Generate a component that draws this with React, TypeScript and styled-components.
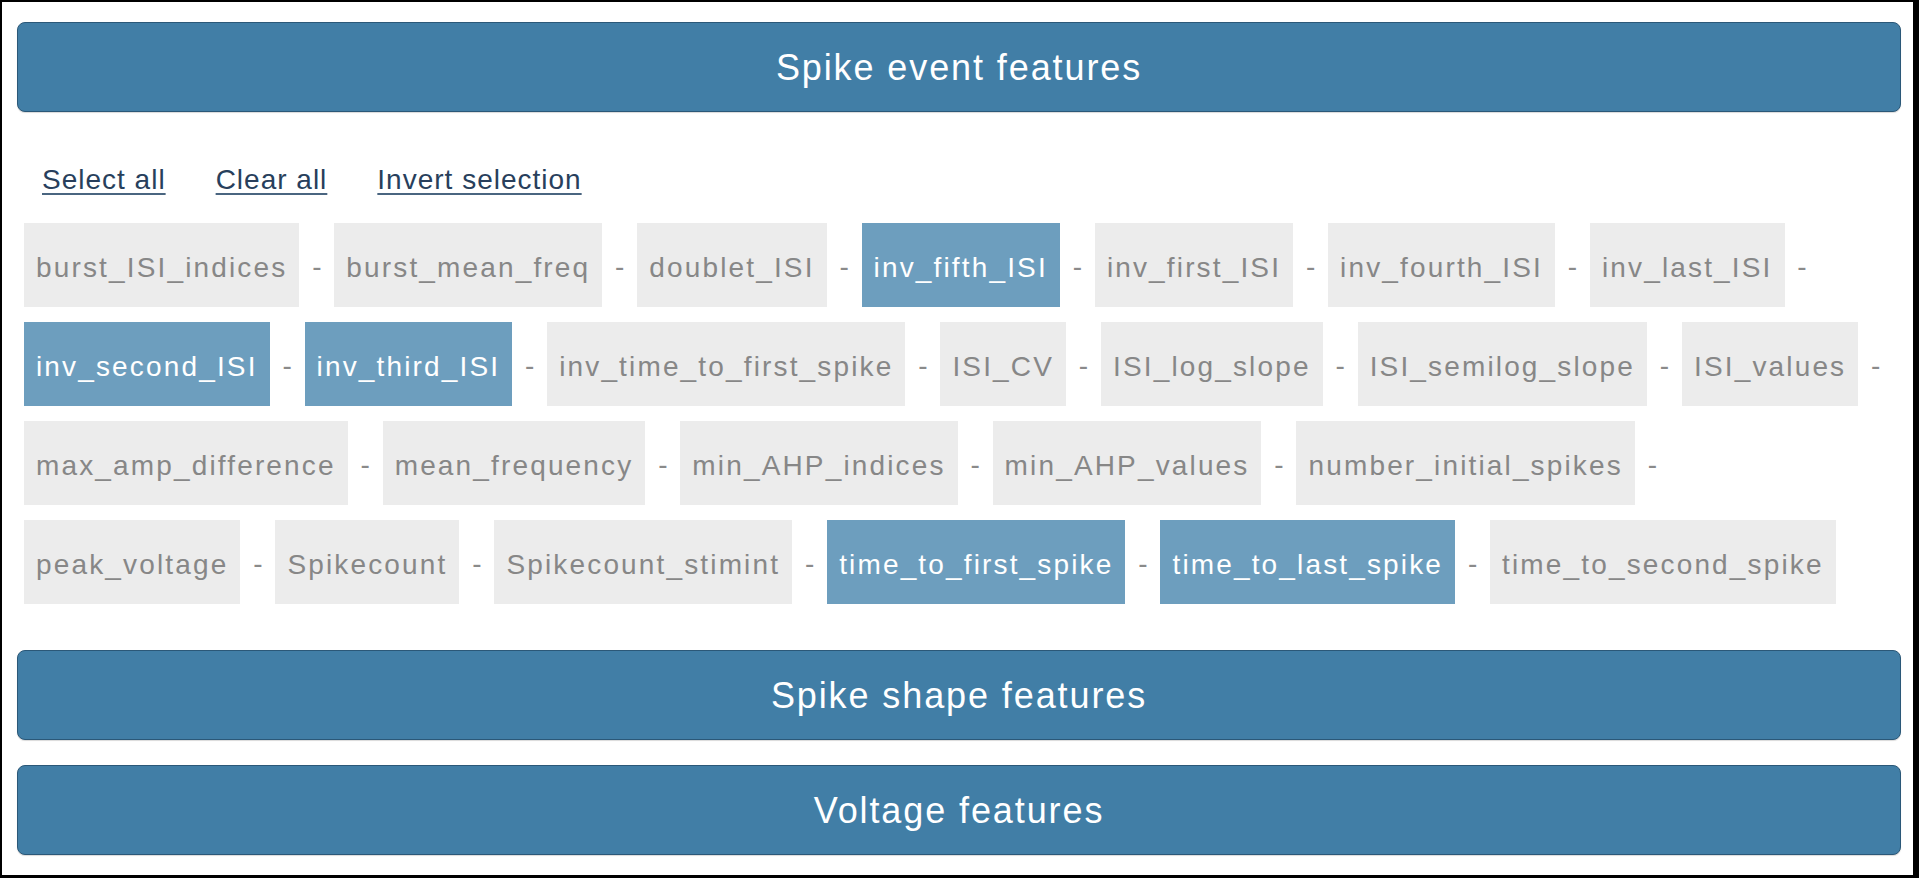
import React from "react";
import styled, { createGlobalStyle } from "styled-components";

const GlobalStyle = createGlobalStyle`
  html, body {
    margin: 0;
    padding: 0;
    background: #ffffff;
  }
  body {
    font-family: "Liberation Sans", Arial, sans-serif;
  }
  * { box-sizing: border-box; }
`;

const Frame = styled.div`
  width: 1919px;
  height: 878px;
  border-style: solid;
  border-color: #000;
  border-width: 2px 6px 3px 2px;
  padding: 20px 12px 0 15px;
  display: flex;
  flex-direction: column;
  overflow: hidden;
`;

const SectionHeader = styled.div<{ $gapAfter?: number }>`
  height: 90px;
  flex: none;
  display: flex;
  align-items: center;
  justify-content: center;
  background: #417ea6;
  border: 1px solid #2b5878;
  border-radius: 8px;
  box-shadow: 0 1px 1px rgba(0, 0, 0, 0.15);
  color: #ffffff;
  font-size: 36px;
  letter-spacing: 1.9px;
  padding-top: 2px;
  margin-bottom: ${(p) => p.$gapAfter ?? 0}px;
`;

const Body = styled.div`
  padding: 52px 0 46px 7px;
`;

const LinkBar = styled.div`
  display: flex;
  gap: 50px;
  padding-left: 18px;
  margin-bottom: 27px;
`;

const ActionLink = styled.a`
  font-size: 28px;
  line-height: 32px;
  letter-spacing: 1px;
  color: #283f5c;
  text-decoration: underline;
  text-decoration-color: #4a6580;
  text-underline-offset: 4px;
  text-decoration-thickness: 2px;
  cursor: pointer;
`;

const ChipList = styled.div`
  display: flex;
  flex-wrap: wrap;
  row-gap: 15px;
`;

const Item = styled.div`
  display: flex;
  align-items: center;
`;

const Chip = styled.span<{ $selected: boolean }>`
  display: inline-block;
  height: 84px;
  padding: 29px 12px 0 12px;
  font-size: 28px;
  line-height: 32px;
  letter-spacing: 2.15px;
  white-space: nowrap;
  background: ${(p) => (p.$selected ? "#6d9ebe" : "#ececec")};
  color: ${(p) => (p.$selected ? "#ffffff" : "#878787")};
`;

const Sep = styled.span`
  display: inline-block;
  width: 35px;
  text-align: center;
  font-size: 28px;
  color: #8a8a8a;
  padding-top: 4px;
`;

const features: { name: string; selected?: boolean }[] = [
  { name: "burst_ISI_indices" },
  { name: "burst_mean_freq" },
  { name: "doublet_ISI" },
  { name: "inv_fifth_ISI", selected: true },
  { name: "inv_first_ISI" },
  { name: "inv_fourth_ISI" },
  { name: "inv_last_ISI" },
  { name: "inv_second_ISI", selected: true },
  { name: "inv_third_ISI", selected: true },
  { name: "inv_time_to_first_spike" },
  { name: "ISI_CV" },
  { name: "ISI_log_slope" },
  { name: "ISI_semilog_slope" },
  { name: "ISI_values" },
  { name: "max_amp_difference" },
  { name: "mean_frequency" },
  { name: "min_AHP_indices" },
  { name: "min_AHP_values" },
  { name: "number_initial_spikes" },
  { name: "peak_voltage" },
  { name: "Spikecount" },
  { name: "Spikecount_stimint" },
  { name: "time_to_first_spike", selected: true },
  { name: "time_to_last_spike", selected: true },
  { name: "time_to_second_spike" },
];

export default function App() {
  return (
    <>
      <GlobalStyle />
      <Frame>
        <SectionHeader>Spike event features</SectionHeader>
        <Body>
          <LinkBar>
            <ActionLink>Select all</ActionLink>
            <ActionLink>Clear all</ActionLink>
            <ActionLink>Invert selection</ActionLink>
          </LinkBar>
          <ChipList>
            {features.map((f, i) => (
              <Item key={f.name}>
                <Chip $selected={!!f.selected}>{f.name}</Chip>
                {i < features.length - 1 && <Sep>-</Sep>}
              </Item>
            ))}
          </ChipList>
        </Body>
        <SectionHeader $gapAfter={25}>Spike shape features</SectionHeader>
        <SectionHeader>Voltage features</SectionHeader>
      </Frame>
    </>
  );
}
